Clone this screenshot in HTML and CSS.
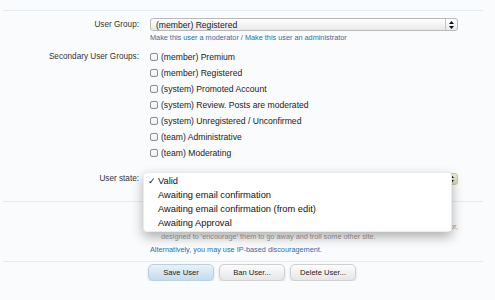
FILE: index.html
```html
<!DOCTYPE html>
<html>
<head>
<meta charset="utf-8">
<link rel="stylesheet" href="styles.css">
</head>
<body>
<div class="page">
  <div class="form">
    <div class="row row-group">
      <div class="label lh13">User Group:</div>
      <div class="ctrl">
        <div class="select">
          <span class="sel-text">(member) Registered</span>
          <span class="sel-arrows">
            <svg width="5" height="8" viewBox="0 0 5 8"><path d="M2.5 0 L5 3 H0 Z M2.5 8 L5 5 H0 Z" fill="#111"/></svg>
          </span>
        </div>
        <div class="links"><a href="#">Make this user a moderator</a> / <a href="#">Make this user an administrator</a></div>
      </div>
    </div>
    <div class="row row-secondary">
      <div class="label lh16">Secondary User Groups:</div>
      <ul class="checks">
        <li><span class="box"></span>(member) Premium</li>
        <li><span class="box"></span>(member) Registered</li>
        <li><span class="box"></span>(system) Promoted Account</li>
        <li><span class="box"></span>(system) Review. Posts are moderated</li>
        <li><span class="box"></span>(system) Unregistered / Unconfirmed</li>
        <li><span class="box"></span>(team) Administrative</li>
        <li><span class="box"></span>(team) Moderating</li>
      </ul>
    </div>
    <div class="row row-state">
      <div class="label lh12">User state:</div>
      <div class="ctrl state-ctrl">
        <div class="select select-focus">
          <span class="sel-arrows">
            <svg width="5" height="8" viewBox="0 0 5 8"><path d="M2.5 0 L5 3 H0 Z M2.5 8 L5 5 H0 Z" fill="#111"/></svg>
          </span>
        </div>
        <ul class="popup">
          <li class="checked"><span class="tick">✓</span>Valid</li>
          <li>Awaiting email confirmation</li>
          <li>Awaiting email confirmation (from edit)</li>
          <li>Awaiting Approval</li>
        </ul>
      </div>
    </div>
  </div>
  <div class="section">
    <div class="row">
      <div></div>
      <div class="ctrl">
        <div class="check-line"><span class="box"></span></div>
        <div class="explain first"><span class="tail">or,</span></div>
        <div class="explain">designed to 'encourage' them to go away and troll some other site.</div>
        <div class="alt"><a href="#">Alternatively, you may use IP-based discouragement.</a></div>
      </div>
    </div>
  </div>
  <div class="buttons">
    <span class="btn primary">Save User</span>
    <span class="btn">Ban User...</span>
    <span class="btn">Delete User...</span>
  </div>
</div>
</body>
</html>
```

FILE: styles.css
```css
body {
  margin: 0;
  background: #fafbfc;
  font-family: "Liberation Sans", Arial, sans-serif;
  color: #333;
}

.page {
  margin-top: 10px;
  margin-left: 3px;
  width: 480px;
  border-top: 1px solid #e3ebf1;
}

.form {
  border-bottom: 1px solid #e3ebf1;
  padding-bottom: 16px;
}

.row {
  display: grid;
  grid-template-columns: 136px 1fr;
  column-gap: 11px;
}

.label {
  text-align: right;
  font-size: 8.2px;
  color: #333;
  white-space: nowrap;
}

.lh13 { line-height: 13px; }
.lh16 { line-height: 16px; }
.lh12 { line-height: 12px; }

.row-group { padding-top: 7px; }
.row-secondary { margin-top: 6px; }
.row-state { margin-top: 12px; }

.ctrl { position: relative; }

.select {
  box-sizing: border-box;
  width: 308px;
  height: 13px;
  border: 1px solid #b9b9b9;
  border-radius: 3px;
  background: linear-gradient(#ffffff, #e9e9e9);
  display: flex;
  align-items: center;
  justify-content: flex-end;
  font-size: 8.6px;
  color: #1a1a1a;
}

.sel-text {
  flex: 1;
  padding-left: 5px;
  white-space: nowrap;
}

.sel-arrows {
  width: 11px;
  height: 100%;
  border-left: 1px solid #c4c4c4;
  display: flex;
  align-items: center;
  justify-content: center;
}

.select-focus {
  height: 12px;
  background: linear-gradient(#efeedb, #d8d7b6);
  border-color: #c9c8a8;
}

.links {
  margin-top: 2px;
  line-height: 10px;
  font-size: 7.3px;
  color: #2f6ea5;
  white-space: nowrap;
}

a {
  color: #2f6ea5;
  text-decoration: none;
}

.checks {
  list-style: none;
  margin: 0;
  padding: 0;
}

.checks li, .check-line {
  display: flex;
  align-items: center;
  height: 16px;
  font-size: 8.6px;
  color: #222;
  white-space: nowrap;
}

.box {
  box-sizing: border-box;
  width: 8px;
  height: 8px;
  border: 1px solid #8d8d8d;
  border-radius: 2px;
  background: linear-gradient(#ffffff, #ececec);
  margin-right: 3px;
  flex: none;
}

.popup {
  position: absolute;
  z-index: 10;
  left: -7px;
  top: -1px;
  box-sizing: border-box;
  width: 309px;
  margin: 0;
  padding: 1px 0;
  list-style: none;
  background: #fff;
  border: 1px solid rgba(0, 0, 0, 0.08);
  border-radius: 4px;
  box-shadow: 0 5px 12px rgba(0, 0, 0, 0.3);
}

.popup li {
  position: relative;
  height: 14px;
  line-height: 14px;
  padding-left: 14px;
  font-size: 9.3px;
  color: #111;
  white-space: nowrap;
}

.tick {
  position: absolute;
  left: 4px;
  top: 0;
  font-family: "DejaVu Sans", sans-serif;
  font-size: 9px;
  font-weight: bold;
}

.section {
  border-bottom: 1px solid #e3ebf1;
  padding-top: 3px;
  padding-bottom: 6px;
}

.explain {
  margin-left: 11px;
  width: 297px;
  line-height: 10px;
  font-size: 7.3px;
  color: #9a9a9a;
  white-space: nowrap;
}

.explain.first {
  margin-top: 1px;
  text-align: right;
}

.alt {
  margin-top: 3px;
  line-height: 10px;
  font-size: 7.3px;
  white-space: nowrap;
}

.buttons {
  display: flex;
  gap: 5px;
  padding-top: 2px;
  padding-left: 145px;
}

.btn {
  box-sizing: border-box;
  width: 66px;
  height: 17px;
  line-height: 15px;
  text-align: center;
  font-size: 7.6px;
  color: #222;
  border: 1px solid #d0d0d0;
  border-radius: 5px;
  background: linear-gradient(#fdfdfd, #e6e6e6);
  box-shadow: 0 1px 2px rgba(0, 0, 0, 0.18);
}

.btn.primary {
  border-color: #b9cfe2;
  background: linear-gradient(#e9f2f9, #c4dbec);
}
```
